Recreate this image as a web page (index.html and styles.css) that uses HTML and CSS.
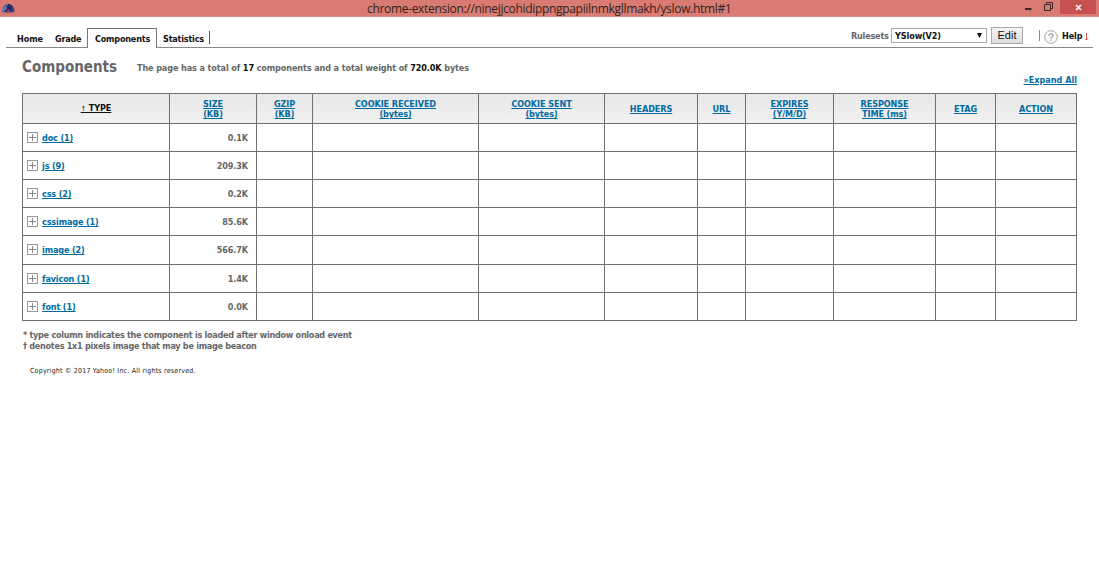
FILE: index.html
```
<!DOCTYPE html>
<html lang="en">
<head>
<meta charset="utf-8">
<title>YSlow</title>
<link rel="stylesheet" href="styles.css">
</head>
<body>
<header class="titlebar">
  <svg class="app-icon" width="14" height="10" viewBox="0 0 14 10"><path d="M1 8.5Q2 1 8 .8Q13 2 13.5 8.5L11 9.5H4Z" fill="#343d80"/><path d="M1 8.5Q2.500 2 7 1.200L5 8Z" fill="#657bb0"/><path d="M8 1L7 9M5 3L11 7M11 3L4 8" stroke="#171d4c" fill="none"/><path d="M7 5.500L9 9H6Z" fill="#c63b61"/></svg>
  <span class="address">chrome-extension://ninejjcohidippngpapiilnmkgllmakh/yslow.html#1</span>
  <div class="controls">
    <svg class="min" width="8" height="11"><path d="M1 9H7.500" stroke="#3b2928" stroke-width="2"/></svg>
    <svg class="max" width="9" height="9"><path d="M2.500 2V.5H8.500V6.500H6.500" stroke="#3b2928" fill="none"/><path d="M.5 2.500H6.500V8.500H.5Z" stroke="#3b2928" fill="none"/></svg>
    <span class="close"><svg width="7" height="7"><path d="M1 1L6 6M6 1L1 6" stroke="#fff" stroke-width="1.500"/></svg></span>
  </div>
</header>
<nav class="toolbar">
  <a class="tab home"><span>Home</span></a><a class="tab grade"><span>Grade</span></a><a class="tab components active"><span>Components</span></a><a class="tab statistics"><span>Statistics</span></a>
  <i class="tab-end"></i>
  <div class="tools">
    <span class="rules-label">Rulesets</span>
    <span class="select"><span>YSlow(V2)</span><svg width="5" height="5"><path d="M0 0H5L2.500 5Z" fill="#111"/></svg></span>
    <span class="edit">Edit</span>
    <i class="help-line"></i>
    <svg class="help-icon" width="14" height="14"><circle cx="7" cy="7" r="6.300" fill="#fafafa" stroke="#a8a8a8"/><path d="M5 5.800Q5 3.800 7 3.800Q9 3.800 9 5.600Q9 6.500 7.200 7.600V8.500M7.200 9.500V10.700" stroke="#999" stroke-width="1.200" fill="none"/></svg>
    <span class="help">Help</span>
    <svg class="arrow" width="5" height="8"><path d="M2.500 0V7M1 5.500L2.500 7L4 5.500" stroke="#cc5244" fill="none"/></svg>
  </div>
</nav>
<main>
  <div class="heading"><h1>Components</h1><p>The page has a total of <b>17</b> components and a total weight of <b>720.0K</b> bytes</p></div>
  <div class="expand"><a>»Expand All</a></div>
  <table>
    <colgroup><col class="c1"><col class="c2"><col class="c3"><col class="c4"><col class="c5"><col class="c6"><col class="c7"><col class="c8"><col class="c9"><col class="c10"><col class="c11"></colgroup>
    <thead><tr><th class="sorted"><a><small>↑</small> TYPE</a></th><th><a>SIZE<br>(KB)</a></th><th><a>GZIP<br>(KB)</a></th><th><a>COOKIE RECEIVED<br>(bytes)</a></th><th><a>COOKIE SENT<br>(bytes)</a></th><th><a>HEADERS</a></th><th><a>URL</a></th><th><a>EXPIRES<br>(Y/M/D)</a></th><th><a>RESPONSE<br>TIME (ms)</a></th><th><a>ETAG</a></th><th><a>ACTION</a></th></tr></thead>
    <tbody>
    <tr><td><i class="plus"></i><a>doc (1)</a></td><td class="size">0.1K</td><td></td><td></td><td></td><td></td><td></td><td></td><td></td><td></td><td></td></tr>
    <tr><td><i class="plus"></i><a>js (9)</a></td><td class="size">209.3K</td><td></td><td></td><td></td><td></td><td></td><td></td><td></td><td></td><td></td></tr>
    <tr><td><i class="plus"></i><a>css (2)</a></td><td class="size">0.2K</td><td></td><td></td><td></td><td></td><td></td><td></td><td></td><td></td><td></td></tr>
    <tr><td><i class="plus"></i><a>cssimage (1)</a></td><td class="size">85.6K</td><td></td><td></td><td></td><td></td><td></td><td></td><td></td><td></td><td></td></tr>
    <tr><td><i class="plus"></i><a>image (2)</a></td><td class="size">566.7K</td><td></td><td></td><td></td><td></td><td></td><td></td><td></td><td></td><td></td></tr>
    <tr><td><i class="plus"></i><a>favicon (1)</a></td><td class="size">1.4K</td><td></td><td></td><td></td><td></td><td></td><td></td><td></td><td></td><td></td></tr>
    <tr><td><i class="plus"></i><a>font (1)</a></td><td class="size">0.0K</td><td></td><td></td><td></td><td></td><td></td><td></td><td></td><td></td><td></td></tr>
    </tbody>
  </table>
  <div class="notes"><p class="note1">* type column indicates the component is loaded after window onload event</p><p class="note2">† denotes 1x1 pixels image that may be image beacon</p></div>
  <footer>Copyright © 2017 Yahoo! Inc. All rights reserved.</footer>
</main>
</body>
</html>
```
FILE: styles.css
```
* { box-sizing: border-box; }
body { margin: 0; height: 584px; overflow: hidden; background: #fff; color: #666; font: bold 9px/10.5px "DejaVu Sans Condensed", "DejaVu Sans", sans-serif; }
p, h1 { margin: 0; }
svg { display: block; flex: none; }
.titlebar { height: 17px; background: #d97b72; border-bottom: 1px solid #dc8b83; display: flex; align-items: flex-start; }
.app-icon { margin: 3px 0 0 1px; }
.address { width: 364px; margin-left: 352px; color: #322322; font: 12px/17px "Open Sans", sans-serif; letter-spacing: -.32px; white-space: nowrap; }
.controls { margin-left: auto; display: flex; }
.min { margin-right: 12px; }
.max { margin: 2px 7px 0 0; }
.close { width: 36px; height: 14px; margin-right: 3px; background: #c75050; display: flex; align-items: center; justify-content: center; }
.toolbar { height: 31px; margin: 0 6px; border-bottom: 1px solid #888; display: flex; align-items: flex-end; color: #111; }
.tab { height: 19px; padding-top: 6px; white-space: nowrap; letter-spacing: -.2px; }
.home { width: 38px; padding-left: 11px; letter-spacing: -.1px; }
.grade { width: 43px; padding-left: 11px; }
.active { width: 70px; padding-left: 7px; background: #fff; border: 1px solid #777; border-bottom: 0; padding-top: 5px; margin-bottom: -1px; height: 20px; }
.statistics { width: 52px; padding-left: 6px; }
.tab-end { width: 1px; height: 13px; background: #555; align-self: flex-start; margin-top: 14px; }
.tools { margin-left: auto; align-self: flex-start; height: 17px; margin-top: 10px; display: flex; align-items: center; white-space: nowrap; }
.rules-label { color: #666; width: 40px; letter-spacing: -.2px; padding-top: 1px; }
.select { width: 96px; height: 15px; border: 1px solid #aaa; display: flex; align-items: center; justify-content: space-between; padding: 0 4px 0 3px; color: #111; }
.select span { padding-top: 1px; letter-spacing: -.1px; }
.edit { width: 32px; height: 17px; margin-left: 4px; border: 1px solid #aaa; background: linear-gradient(#f5f5f5, #ddd); text-align: center; font: 11px/15px "Liberation Sans", sans-serif; }
.help-line { width: 1px; height: 11px; background: #888; margin-left: 16px; }
.help-icon { margin: 2px 0 0 4px; }
.help { margin-left: 4px; padding-top: 1px; width: 22px; letter-spacing: -.1px; }
.arrow { margin: 3px 4px 0 0; }
main { padding: 0 22px; }
.heading { display: flex; height: 27px; padding-top: 9px; white-space: nowrap; }
h1 { width: 115px; padding-top: 1px; font: bold 15px/18px "DejaVu Sans Condensed", sans-serif; }
.heading p { padding-top: 6px; letter-spacing: -.105px; }
b { color: #111; }
.expand { height: 18px; text-align: right; }
a { white-space: nowrap; }
.expand a, th a, td a { color: #006ba1; text-decoration: underline; }
table { width: 1055px; table-layout: fixed; border-spacing: 0; border-left: 1px solid #707070; border-top: 1px solid #707070; }
th, td { padding: 0; border-right: 1px solid #707070; border-bottom: 1px solid #707070; vertical-align: middle; }
th { height: 30px; padding-top: 1px; background: linear-gradient(#e8e8e8, #f1f1f1); }
th a { letter-spacing: -.07px; }
th.sorted a { color: #111; }
small { font-size: 7px; font-weight: normal; }
td { height: 28px; }
td a { letter-spacing: -.14px; }
tr:nth-child(5) td { height: 29px; }
.c1 { width: 147px; } .c2 { width: 87px; } .c3 { width: 56px; } .c4 { width: 166px; } .c5 { width: 126px; } .c6 { width: 93px; } .c7 { width: 48px; } .c8 { width: 88px; } .c9 { width: 102px; } .c10 { width: 60px; } .c11 { width: 81px; }
.plus { display: inline-block; width: 11px; height: 11px; margin: 0 4px 0 4px; border: 1px solid #999; vertical-align: -2px; background: linear-gradient(#888,#888) center/7px 1px no-repeat, linear-gradient(#888,#888) center/1px 7px no-repeat; }
.size { text-align: right; padding: 1px 8px 0 0; letter-spacing: -.1px; }
.notes { padding: 9px 0 0 1px; white-space: nowrap; letter-spacing: -.275px; }
footer { padding: 15px 0 0 8px; color: #222; font: 7px/10px "DejaVu Sans Condensed", sans-serif; letter-spacing: .22px; white-space: nowrap; }
```
